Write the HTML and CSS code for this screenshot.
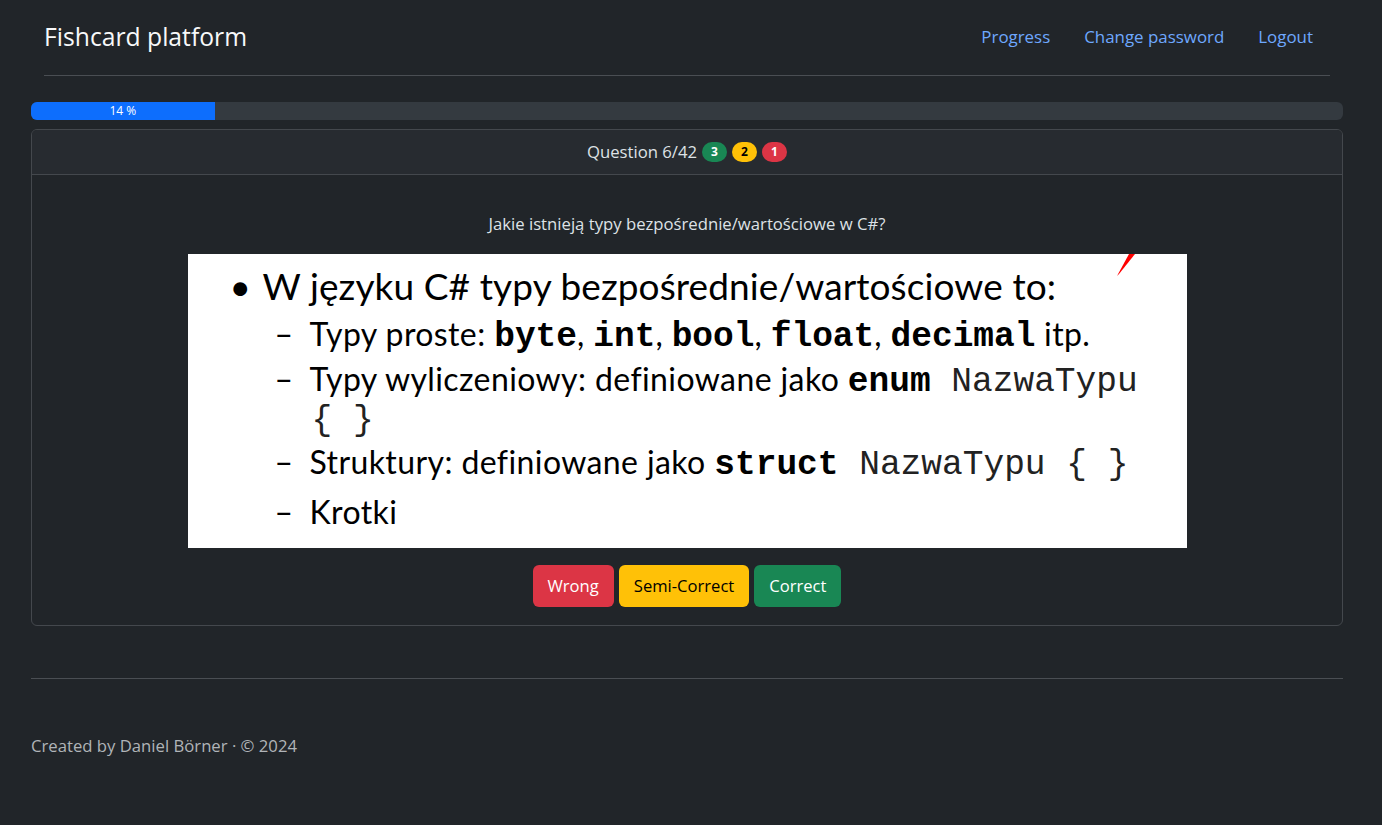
FILE: index.html
```html
<!DOCTYPE html>
<html lang="pl">
<head>
<meta charset="utf-8">
<title>Fishcard platform</title>
<link rel="stylesheet" href="styles.css">
</head>
<body>
<div class="page">
  <header class="topbar">
    <a class="brand" href="#">Fishcard platform</a>
    <nav class="nav">
      <a class="nav-link" href="#">Progress</a>
      <a class="nav-link" href="#">Change password</a>
      <a class="nav-link" href="#">Logout</a>
    </nav>
  </header>

  <main>
    <div class="progress">
      <div class="progress-bar" style="width:14%">14 %</div>
    </div>

    <section class="card">
      <div class="card-header">
        <span>Question 6/42</span>
        <span class="badge badge-green">3</span>
        <span class="badge badge-yellow">2</span>
        <span class="badge badge-red">1</span>
      </div>
      <div class="card-body">
        <p class="question">Jakie istnieją typy bezpośrednie/wartościowe w C#?</p>
        <div class="slide">
          <svg class="slide-mark" width="20" height="24" viewBox="0 0 20 24"><polygon points="0,22 12,0 18,0 2,20" fill="#ff0000"/></svg>
          <div class="s-line s-main"><span class="bullet">•</span>W języku C# typy bezpośrednie/wartościowe to:</div>
          <div class="s-line s-sub s-first"><span class="dash">–</span>Typy proste: <b class="code">byte</b>, <b class="code">int</b>, <b class="code">bool</b>, <b class="code">float</b>, <b class="code">decimal</b> itp.</div>
          <div class="s-line s-sub"><span class="dash">–</span>Typy wyliczeniowy: definiowane jako <b class="code">enum</b><span class="mono"> NazwaTypu</span></div>
          <div class="s-line s-cont"><span class="mono">{ }</span></div>
          <div class="s-line s-sub"><span class="dash">–</span>Struktury: definiowane jako <b class="code">struct</b><span class="mono"> NazwaTypu { }</span></div>
          <div class="s-line s-sub s-last"><span class="dash">–</span>Krotki</div>
        </div>
        <div class="actions">
          <button class="btn btn-red">Wrong</button>
          <button class="btn btn-yellow">Semi-Correct</button>
          <button class="btn btn-green">Correct</button>
        </div>
      </div>
    </section>
  </main>

  <hr class="divider">
  <footer class="footer">Created by Daniel Börner · © 2024</footer>
</div>
</body>
</html>
```

FILE: styles.css
```css
* { box-sizing: border-box; }

html, body {
  margin: 0;
  padding: 0;
  background: #212529;
}

body {
  color: #dee2e6;
  font-family: "Open Sans", "Noto Sans", sans-serif;
  font-size: 16.7px;
  line-height: 24px;
}

.page {
  width: 1312px;
  margin-left: 31px;
}

/* Header */
.topbar {
  margin: 0 13px;
  height: 76px;
  padding-bottom: 2px;
  display: flex;
  align-items: center;
  justify-content: space-between;
  border-bottom: 1px solid #4a4e53;
}

.brand {
  color: #f8f9fa;
  text-decoration: none;
  font-size: 24.7px;
  line-height: 36px;
}

.nav {
  display: flex;
}

.nav-link {
  color: #6ea8fe;
  text-decoration: none;
  font-size: 16.9px;
  padding: 0 17px;
}

/* Progress */
.progress {
  margin-top: 26px;
  height: 18px;
  background: #343a40;
  border-radius: 6px;
  overflow: hidden;
  display: flex;
}

.progress-bar {
  background: #0d6efd;
  color: #fff;
  font-size: 12px;
  line-height: 18px;
  text-align: center;
}

/* Card */
.card {
  margin-top: 9px;
  border: 1px solid #44484d;
  border-radius: 6px;
  overflow: hidden;
}

.card-header {
  background: #272b30;
  border-bottom: 1px solid #44484d;
  padding: 10px 16px;
  display: flex;
  justify-content: center;
  align-items: center;
  gap: 5px;
  line-height: 24px;
}

.badge {
  display: inline-block;
  min-width: 25px;
  height: 20px;
  border-radius: 10px;
  font-size: 12px;
  font-weight: 700;
  line-height: 20px;
  text-align: center;
  color: #fff;
}
.badge-green { background: #198754; }
.badge-yellow { background: #ffc107; color: #000; }
.badge-red { background: #dc3545; }

.card-body {
  padding: 16px 16px 18px;
  display: flex;
  flex-direction: column;
  align-items: center;
}

.question {
  margin: 0;
  padding: 21px 0 18px;
  line-height: 24px;
}

/* Slide picture */
.slide {
  position: relative;
  width: 999px;
  height: 294px;
  background: #ffffff;
  color: #000;
  overflow: hidden;
  font-family: Lato, "Liberation Sans", sans-serif;
  padding-top: 9px;
}

.slide-mark {
  position: absolute;
  left: 929px;
  top: 0;
}

.s-line {
  white-space: pre;
}

.s-main {
  font-size: 37px;
  line-height: 46px;
  padding-left: 42px;
  letter-spacing: 0.1px;
}

.bullet {
  display: inline-block;
  width: 33px;
}

.s-sub {
  font-size: 32px;
  line-height: 45px;
  padding-left: 87px;
  letter-spacing: 0.4px;
}

.s-first {
  margin-top: 2px;
}

.s-last {
  margin-top: 5px;
}

.s-cont {
  font-size: 32px;
  line-height: 34px;
  padding-left: 124px;
}

.dash {
  display: inline-block;
  width: 35px;
}

.code {
  font-family: "Liberation Mono", "Courier New", monospace;
  font-weight: 700;
  font-size: 34.5px;
  line-height: 1;
  letter-spacing: 0;
}

.mono {
  font-family: "Liberation Mono", "Courier New", monospace;
  font-weight: 400;
  font-size: 34.5px;
  line-height: 1;
  color: #222;
  letter-spacing: 0;
}

/* Buttons */
.actions {
  margin-top: 17px;
  display: flex;
  gap: 5px;
}

.btn {
  font-family: inherit;
  font-size: 16.6px;
  line-height: 24px;
  padding: 9px 15px;
  border: 0;
  border-radius: 6px;
  color: #fff;
  cursor: pointer;
}
.btn-red { background: #dc3545; }
.btn-yellow { background: #ffc107; color: #000; }
.btn-green { background: #198754; }

/* Footer */
.divider {
  margin: 52px 0 0;
  border: 0;
  border-top: 1px solid #4a4e53;
}

.footer {
  padding-top: 55px;
  color: #b0b4b8;
  font-size: 16.7px;
  line-height: 24px;
}
```
